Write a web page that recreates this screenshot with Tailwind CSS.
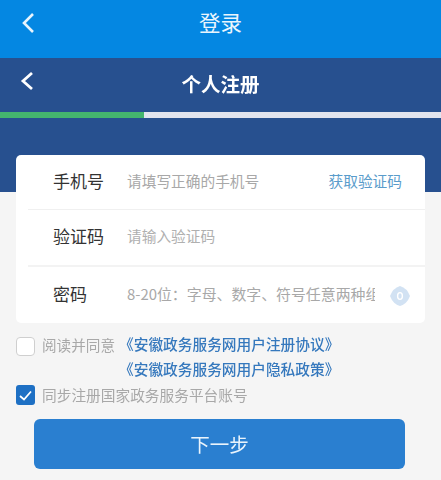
<!DOCTYPE html>
<html lang="zh-CN">
<head>
    <meta charset="UTF-8">
    <title>个人注册</title>
    <script src="https://cdn.jsdelivr.net/npm/@tailwindcss/browser@4"></script>
</head>
<body class="bg-[#f5f5f5] font-['Noto_Sans_CJK_SC','Liberation_Sans',sans-serif]">
    <div class="w-[441px] h-[480px] overflow-hidden blur-[0.4px]">
        <!-- Outer header -->
        <div class="h-[58px] bg-[#0487e2] flex items-center justify-center relative">
            <svg class="absolute left-[21px] top-[12px]" width="14" height="22" viewBox="0 0 14 22" fill="none"><path d="M12 2 L3 11 L12 20" stroke="#e8f4fd" stroke-width="2.6"/></svg>
            <span class="text-[#eaf5fd] text-[21.5px] leading-none -mt-[14px]">登录</span>
        </div>

        <!-- Inner header and progress -->
        <div class="h-[134px] bg-[#27508f]">
            <div class="h-[54px] flex items-center justify-center relative">
                <svg class="absolute left-[20px] top-[12px]" width="14" height="22" viewBox="0 0 14 22" fill="none"><path d="M12 3 L3 11 L12 19" stroke="#ffffff" stroke-width="2.8"/></svg>
                <span class="text-white text-[19.5px] font-bold leading-none -mt-[3px]">个人注册</span>
            </div>
            <div class="h-[6px] bg-[#e1e4ee] flex">
                <div class="w-[144px] bg-[#44b56e]"></div>
            </div>
        </div>

        <!-- Form card -->
        <div class="mx-4 -mt-[37px] h-[168px] relative bg-white rounded-[5px] flex flex-col">
            <div class="h-[55px] pb-[2px] flex items-center border-b border-[#f0f0f0] ml-3">
                <span class="w-[99px] pl-[25px] text-[17px] text-[#333]">手机号</span>
                <span class="text-[14.7px] text-[#a8a8a8]">请填写正确的手机号</span>
                <span class="ml-auto mr-[23px] text-[14.7px] text-[#5a9ccb]">获取验证码</span>
            </div>
            <div class="h-[57px] pb-[3px] flex items-center border-b-2 border-[#f3f3f3] ml-3">
                <span class="w-[99px] pl-[25px] text-[17px] text-[#333]">验证码</span>
                <span class="text-[14.7px] text-[#b0b0b0]">请输入验证码</span>
            </div>
            <div class="flex-1 pb-[2px] flex items-center ml-3">
                <span class="w-[99px] pl-[25px] text-[17px] text-[#333]">密码</span>
                <span class="w-[248px] overflow-hidden whitespace-nowrap text-[14.9px] text-[#a8a8a8]">8-20位：字母、数字、符号任意两种组合</span>
                <svg class="ml-[14px] mt-[4px]" width="22" height="22" viewBox="0 0 22 22"><path d="M11 1 Q18 3 21 11 Q18 19 11 21 Q4 19 1 11 Q4 3 11 1Z" fill="#d2e2f3"/><ellipse cx="11" cy="11" rx="2.4" ry="3.4" fill="none" stroke="#ffffff" stroke-width="1.4"/></svg>
            </div>
        </div>

        <!-- Agreements -->
        <div class="mt-[14px] ml-4 flex">
            <span class="w-[19px] h-[19px] rounded-[4px] border border-[#cfcfcf] bg-white"></span>
            <span class="ml-[7px] w-[77px] text-[14.6px] leading-[15px] text-[#a8a8a8]">阅读并同意</span>
            <div class="flex flex-col text-[14.7px] leading-[25px] -mt-[6px] text-[#3578bd] font-medium">
                <span>《安徽政务服务网用户注册协议》</span>
                <span>《安徽政务服务网用户隐私政策》</span>
            </div>
        </div>
        <div class="mt-[4px] ml-4 flex items-center">
            <span class="w-[19px] h-[20px] rounded-[3px] bg-[#1e70c4] flex items-center justify-center">
                <svg width="13" height="11" viewBox="0 0 13 11" fill="none"><path d="M1 6 L5 9.5 L12 1.5" stroke="#ffffff" stroke-width="1.8"/></svg>
            </span>
            <span class="ml-[7px] text-[14.7px] text-[#a8a8a8] leading-[20px]">同步注册国家政务服务平台账号</span>
        </div>

        <!-- Next button -->
        <div class="mt-[14px] ml-[34px] w-[371px] h-[50px] rounded-[6px] bg-[#2a7fd0] flex items-center justify-center">
            <span class="text-[#eaf4fc] text-[19.5px]">下一步</span>
        </div>
    </div>
</body>
</html>
